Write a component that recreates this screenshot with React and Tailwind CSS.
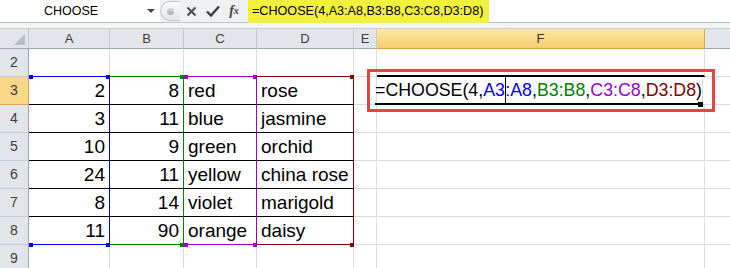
import React from "react";

const cols = [
  { key: "A", w: "w-[81px]" },
  { key: "B", w: "w-[74px]" },
  { key: "C", w: "w-[73px]" },
  { key: "D", w: "w-[97px]" },
  { key: "E", w: "w-[23px]" },
  { key: "F", w: "w-[328px]" },
  { key: "G", w: "w-[80px]", hideLabel: true },
];

// right border colour of each highlighted range
const rangeRight = ["border-r-[#0000ff]", "border-r-[#008000]", "border-r-[#9900cc]", "border-r-[#800000]"];
const rangeBottom = ["border-b-[#0000ff]", "border-b-[#008000]", "border-b-[#9900cc]", "border-b-[#800000]"];

const data = [
  [2, 8, "red", "rose"],
  [3, 11, "blue", "jasmine"],
  [10, 9, "green", "orchid"],
  [24, 11, "yellow", "china rose"],
  [8, 14, "violet", "marigold"],
  [11, 90, "orange", "daisy"],
];

const RowHeader = ({ n, active }) => (
  <div
    className={`w-[29px] h-[28px] shrink-0 flex items-center justify-center text-[14px] border-r border-b ${
      active
        ? "bg-[#f8d888] border-[#d9a441] text-[#3a3a3a]"
        : "bg-[#e2e6eb] border-r-[#9ea7b1] border-b-[#c4cad1] text-[#3c3c3c]"
    }`}
  >
    {n}
  </div>
);

const Handle = ({ className }) => <div className={`absolute w-[4px] h-[4px] ${className}`} />;

const FormulaBar = () => (
  <div className="flex h-[23px] bg-white border-b border-[#bcc2c9]">
    <div className="w-[142px] flex items-center justify-center text-[12.5px] text-black">CHOOSE</div>
    <div className="w-[18px] flex items-center justify-center">
      <div className="w-0 h-0 border-l-[4px] border-r-[4px] border-t-[4px] border-l-transparent border-r-transparent border-t-[#444]" />
    </div>
    <div className="flex items-center bg-[#eef0f2] h-full">
      <div className="w-[20px] h-[20px] rounded-l-full border border-r-0 border-[#c2c7cd] bg-gradient-to-b from-[#fafafa] to-[#e3e6ea] flex items-center justify-center">
        <div className="w-[7px] h-[7px] rounded-full bg-gradient-to-b from-[#d8dbdf] to-[#a9adb3]" />
      </div>
      <div className="w-[22px] flex items-center justify-center">
        <svg width="11" height="11" viewBox="0 0 11 11">
          <path d="M1.5 1.5 L9.5 9.5 M9.5 1.5 L1.5 9.5" stroke="#4a4a4a" strokeWidth="2" />
        </svg>
      </div>
      <div className="w-[21px] flex items-center justify-center">
        <svg width="14" height="12" viewBox="0 0 14 12">
          <path d="M1 6.5 L5 10.5 L13 1.5" stroke="#3d3d3d" strokeWidth="2.4" fill="none" />
        </svg>
      </div>
      <div className="w-[22px] flex items-center justify-center font-['Liberation_Serif',serif] italic font-bold text-[14px] text-[#444] leading-none">
        f<span className="text-[10px]">x</span>
      </div>
      <div className="w-[3px]" />
    </div>
    <div className="w-[241px] h-[24px] -mt-px bg-[#f2f23c] flex items-center pl-[4px] text-[12.6px] text-black whitespace-nowrap">
      =CHOOSE(4,A3:A8,B3:B8,C3:C8,D3:D8)
    </div>
  </div>
);

const App = () => {
  return (
    <div className="w-[730px] h-[268px] overflow-hidden bg-white font-['Liberation_Sans',Arial,sans-serif] text-black">
      <FormulaBar />
      <div className="h-[6px] bg-[#f3f4f6] border-b border-[#c9ced4]" />

      <div className="relative">
        {/* Column headers */}
        <div className="flex h-[20px]">
          <div className="w-[29px] shrink-0 bg-[#e2e6eb] border-r border-b border-r-[#c4cad1] border-b-[#9ea7b1] relative">
            <div className="absolute right-[3px] bottom-[3px] w-0 h-0 border-l-[11px] border-t-[11px] border-l-transparent border-t-transparent border-r-0 border-b-[11px] border-b-[#b9bec4] border-r-transparent" />
          </div>
          {cols.map((c) => (
            <div
              key={c.key}
              className={`${c.w} shrink-0 flex items-center justify-center text-[13px] border-r border-b ${
                c.key === "F"
                  ? "bg-gradient-to-b from-[#fce7a6] to-[#f7cd6d] border-[#d9a441] text-[#333]"
                  : "bg-[#e2e6eb] border-r-[#c4cad1] border-b-[#9ea7b1] text-[#3c3c3c]"
              }`}
            >
              {c.hideLabel ? null : c.key}
            </div>
          ))}
        </div>

        {/* Row 2 */}
        <div className="flex">
          <RowHeader n={2} />
          {cols.map((c, i) => (
            <div
              key={c.key}
              className={`${c.w} h-[28px] shrink-0 border-r border-b border-r-[#dadcdd] ${
                i < 4 ? rangeBottom[i] : c.key === "F" ? "border-b-2 border-b-black" : "border-b-[#dadcdd]"
              }`}
            />
          ))}
        </div>

        {/* Rows 3 - 8 */}
        {data.map((row, r) => (
          <div key={r} className="flex">
            <RowHeader n={r + 3} active={r === 0} />
            {cols.map((c, i) => {
              if (i < 4) {
                const val = row[i];
                const isNum = typeof val === "number";
                return (
                  <div
                    key={c.key}
                    className={`${c.w} h-[28px] shrink-0 border-r border-b ${rangeRight[i]} ${
                      r === 5 ? rangeBottom[i] : "border-b-black"
                    } flex items-center pt-[2px] px-[4px] text-[19px] whitespace-nowrap ${
                      isNum ? "justify-end" : "justify-start"
                    }`}
                  >
                    {val}
                  </div>
                );
              }
              if (c.key === "F" && r === 0) {
                return (
                  <div
                    key={c.key}
                    className={`${c.w} h-[28px] shrink-0 relative border-r border-r-[#dadcdd] border-b-2 border-b-black flex items-center -ml-[2px] pl-0 text-[17.8px] whitespace-nowrap`}
                  >
                    <span>=CHOOSE(4,</span>
                    <span className="text-[#0000ff]">A3</span>
                    <span className="inline-block w-[1.5px] h-[27px] bg-black" />
                    <span className="text-[#0000ff]">:A8</span>
                    <span>,</span>
                    <span className="text-[#008000]">B3:B8</span>
                    <span>,</span>
                    <span className="text-[#9900cc]">C3:C8</span>
                    <span>,</span>
                    <span className="text-[#800000]">D3:D8</span>
                    <span>)</span>
                    <div className="absolute -right-[1px] -bottom-[4px] w-[5px] h-[5px] bg-black" />
                  </div>
                );
              }
              return (
                <div
                  key={c.key}
                  className={`${c.w} h-[28px] shrink-0 border-r border-b border-[#dadcdd]`}
                />
              );
            })}
          </div>
        ))}

        {/* Row 9 */}
        <div className="flex">
          <RowHeader n={9} />
          {cols.map((c) => (
            <div key={c.key} className={`${c.w} h-[28px] shrink-0 border-r border-b border-[#dadcdd]`} />
          ))}
        </div>

        {/* range handles */}
        <Handle className="left-[29px] top-[46px] bg-[#0000ff]" />
        <Handle className="left-[106px] top-[46px] bg-[#0000ff]" />
        <Handle className="left-[180px] top-[46px] bg-[#008000]" />
        <Handle className="left-[184px] top-[46px] w-[2px] bg-[#9900cc]" />
        <Handle className="left-[253px] top-[46px] bg-[#9900cc]" />
        <Handle className="left-[350px] top-[46px] bg-[#800000]" />
        <Handle className="left-[29px] top-[214px] bg-[#0000ff]" />
        <Handle className="left-[106px] top-[214px] bg-[#0000ff]" />
        <Handle className="left-[180px] top-[214px] bg-[#008000]" />
        <Handle className="left-[184px] top-[214px] w-[2px] bg-[#9900cc]" />
        <Handle className="left-[253px] top-[214px] bg-[#9900cc]" />
        <Handle className="left-[350px] top-[214px] bg-[#800000]" />

        {/* callout around the edited cell */}
        <div className="absolute left-[367px] top-[40px] w-[348px] h-[43px] border-[3px] border-[#e3463f]" />
      </div>
    </div>
  );
};

export default App;
